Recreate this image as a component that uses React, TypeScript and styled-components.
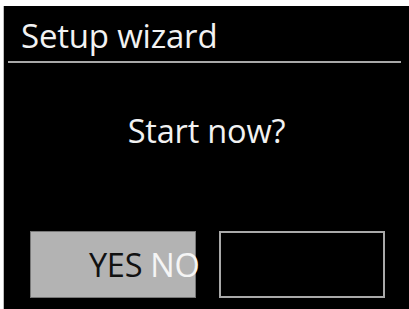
import React from "react";
import styled, { createGlobalStyle } from "styled-components";

const Global = createGlobalStyle`
  html, body { margin: 0; padding: 0; background: #ffffff; }
  body { width: 409px; height: 309px; overflow: hidden; }
`;

const Screen = styled.div`
  box-sizing: border-box;
  margin: 6px 0 0 3px;
  width: 406px;
  height: 303px;
  background: #000;
  border-left: 1px solid #bdbdbd;
  display: flex;
  flex-direction: column;
  font-family: "Open Sans", "Noto Sans", sans-serif;
  color: #f2f2f2;
`;

const Title = styled.div`
  font-size: 33px;
  line-height: 1;
  padding: 13px 0 0 17px;
  height: 42px;
  letter-spacing: -0.2px;
`;

const Divider = styled.div`
  height: 2px;
  background: #a8a8a8;
  margin: 0 8px 0 4px;
`;

const Question = styled.div`
  font-size: 32.5px;
  line-height: 1;
  height: 33px;
  text-align: center;
  margin-top: 52px;
  letter-spacing: -0.2px;
`;

const ButtonRow = styled.div`
  display: flex;
  gap: 23px;
  margin-top: 83px;
  padding-left: 26px;
`;

const ChoiceBox = styled.div<{ $selected?: boolean }>`
  box-sizing: border-box;
  width: 166px;
  height: 67px;
  background: ${(p) => (p.$selected ? "#b3b3b3" : "#000")};
  border: ${(p) => (p.$selected ? "1px solid #777" : "2px solid #a9a9a9")};
  display: flex;
  align-items: flex-end;
  font-size: 32.5px;
  line-height: 1;
  white-space: nowrap;
`;

const Label = styled.span`
  padding: 0 0 16px 58px;
  letter-spacing: -0.3px;
`;

const Dark = styled.span`
  color: #111;
`;

const Light = styled.span`
  color: #f5f5f5;
`;

export default function App() {
  return (
    <>
      <Global />
      <Screen>
        <Title>Setup wizard</Title>
        <Divider />
        <Question>Start now?</Question>
        <ButtonRow>
          <ChoiceBox $selected>
            <Label>
              <Dark>YES</Dark> <Light>NO</Light>
            </Label>
          </ChoiceBox>
          <ChoiceBox />
        </ButtonRow>
      </Screen>
    </>
  );
}
